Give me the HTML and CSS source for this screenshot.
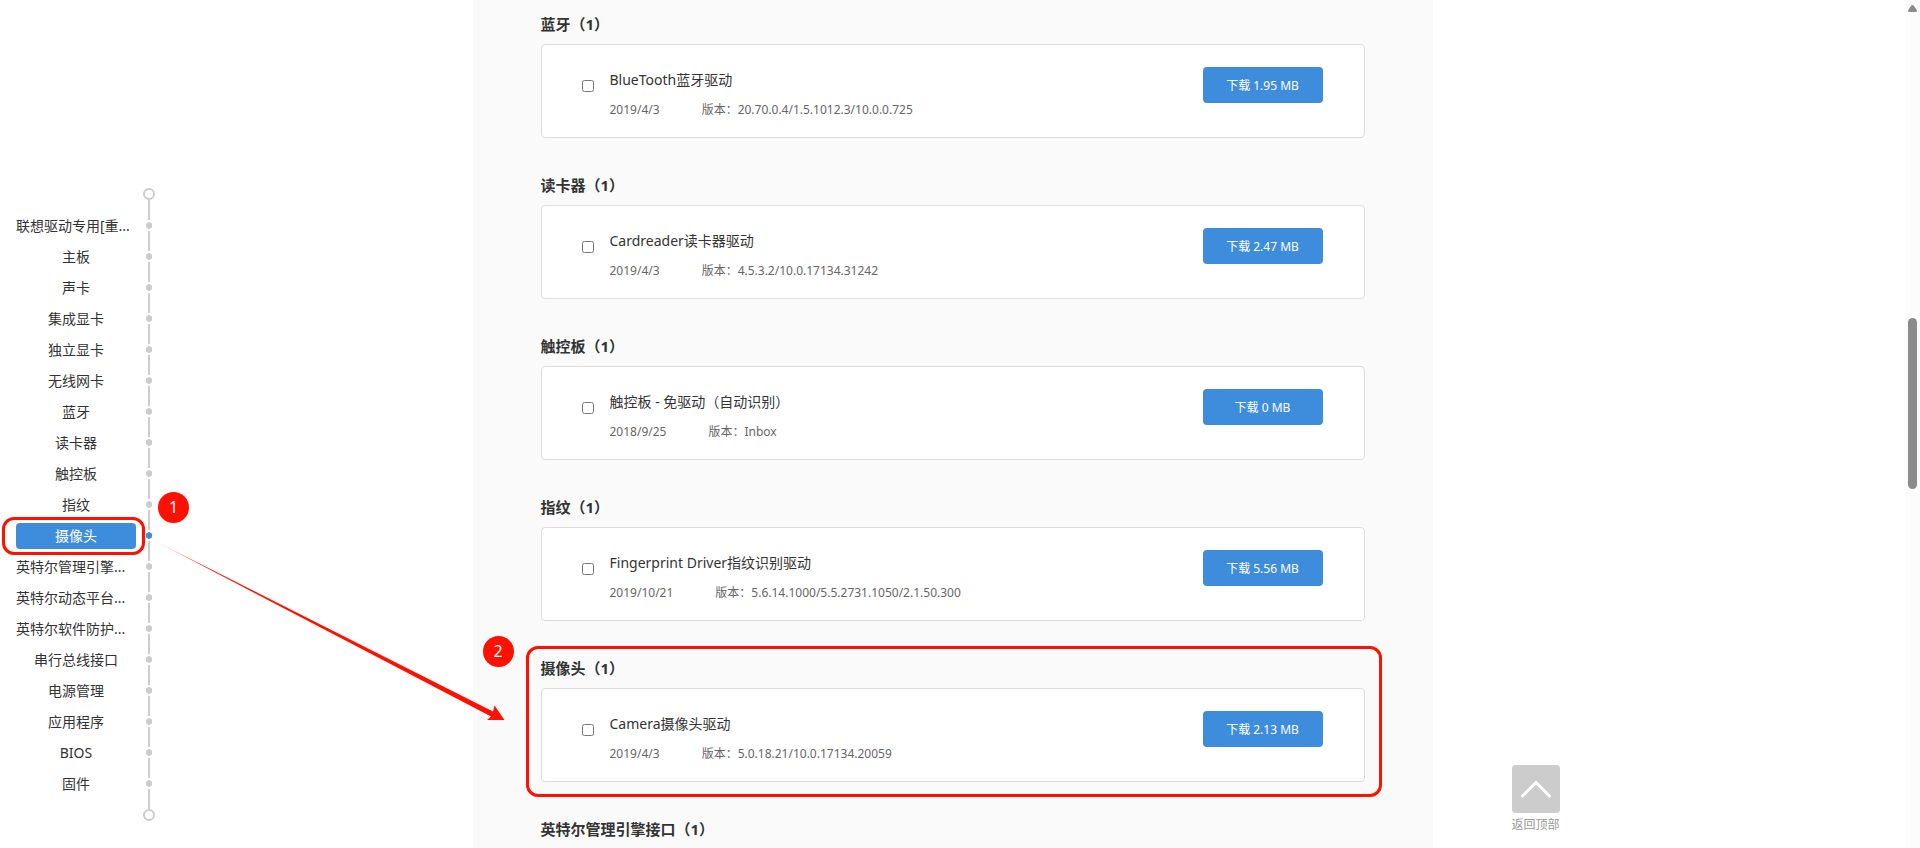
FILE: index.html
```html
<!DOCTYPE html>
<html lang="zh-CN">
<head>
  <meta charset="UTF-8">
  <meta name="viewport" content="width=device-width, initial-scale=1.0">
  <title>驱动下载</title>
  <link rel="stylesheet" href="styles.css">
</head>
<body>
  <div class="page">
    <nav class="side-nav">
      <div class="rail-end rail-top"></div>
      <ul>
        <li><a href="#" class="long">联想驱动专用[重...</a><span class="rail"></span></li>
        <li><a href="#">主板</a><span class="rail"></span></li>
        <li><a href="#">声卡</a><span class="rail"></span></li>
        <li><a href="#">集成显卡</a><span class="rail"></span></li>
        <li><a href="#">独立显卡</a><span class="rail"></span></li>
        <li><a href="#">无线网卡</a><span class="rail"></span></li>
        <li><a href="#bluetooth">蓝牙</a><span class="rail"></span></li>
        <li><a href="#cardreader">读卡器</a><span class="rail"></span></li>
        <li><a href="#touchpad">触控板</a><span class="rail"></span></li>
        <li><a href="#fingerprint">指纹</a><span class="rail"></span></li>
        <li class="active">
          <a href="#camera">摄像头</a><span class="rail"></span>
          <span class="step step-1">1</span>
        </li>
        <li><a href="#mei" class="long">英特尔管理引擎...</a><span class="rail"></span></li>
        <li><a href="#" class="long">英特尔动态平台...</a><span class="rail"></span></li>
        <li><a href="#" class="long">英特尔软件防护...</a><span class="rail"></span></li>
        <li><a href="#">串行总线接口</a><span class="rail"></span></li>
        <li><a href="#">电源管理</a><span class="rail"></span></li>
        <li><a href="#">应用程序</a><span class="rail"></span></li>
        <li><a href="#">BIOS</a><span class="rail"></span></li>
        <li><a href="#">固件</a><span class="rail"></span></li>
      </ul>
      <div class="rail-end rail-bottom"></div>
    </nav>

    <main class="drivers">
      <section class="group" id="bluetooth">
        <h2>蓝牙（1）</h2>
        <div class="card">
          <input type="checkbox" id="d1">
          <div class="info">
            <label for="d1">BlueTooth蓝牙驱动</label>
            <p class="meta"><span>2019/4/3</span><span>版本：20.70.0.4/1.5.1012.3/10.0.0.725</span></p>
          </div>
          <button type="button" class="download">下载 1.95 MB</button>
        </div>
      </section>

      <section class="group" id="cardreader">
        <h2>读卡器（1）</h2>
        <div class="card">
          <input type="checkbox" id="d2">
          <div class="info">
            <label for="d2">Cardreader读卡器驱动</label>
            <p class="meta"><span>2019/4/3</span><span>版本：4.5.3.2/10.0.17134.31242</span></p>
          </div>
          <button type="button" class="download">下载 2.47 MB</button>
        </div>
      </section>

      <section class="group" id="touchpad">
        <h2>触控板（1）</h2>
        <div class="card">
          <input type="checkbox" id="d3">
          <div class="info">
            <label for="d3">触控板 - 免驱动（自动识别）</label>
            <p class="meta"><span>2018/9/25</span><span>版本：Inbox</span></p>
          </div>
          <button type="button" class="download">下载 0 MB</button>
        </div>
      </section>

      <section class="group" id="fingerprint">
        <h2>指纹（1）</h2>
        <div class="card">
          <input type="checkbox" id="d4">
          <div class="info">
            <label for="d4">Fingerprint Driver指纹识别驱动</label>
            <p class="meta"><span>2019/10/21</span><span>版本：5.6.14.1000/5.5.2731.1050/2.1.50.300</span></p>
          </div>
          <button type="button" class="download">下载 5.56 MB</button>
        </div>
      </section>

      <section class="group marked" id="camera">
        <span class="step step-2">2</span>
        <h2>摄像头（1）</h2>
        <div class="card">
          <input type="checkbox" id="d5">
          <div class="info">
            <label for="d5">Camera摄像头驱动</label>
            <p class="meta"><span>2019/4/3</span><span>版本：5.0.18.21/10.0.17134.20059</span></p>
          </div>
          <button type="button" class="download">下载 2.13 MB</button>
        </div>
      </section>

      <section class="group" id="mei">
        <h2>英特尔管理引擎接口（1）</h2>
      </section>
    </main>

    <a href="#" class="back-top">
      <span class="back-icon">
        <svg width="48" height="48" viewBox="0 0 48 48" aria-hidden="true">
          <path d="M10.5 31 L24 17.5 L37.5 31" fill="none" stroke="#fff" stroke-width="3" stroke-linecap="round" stroke-linejoin="round"/>
        </svg>
      </span>
      返回顶部
    </a>

    <div class="scrollbar">
      <svg width="9" height="7" viewBox="0 0 9 7" aria-hidden="true">
        <path d="M4.5 0 Q5.4 0 6 1 L8.7 5 Q9.3 7 8 7 L1 7 Q-0.3 7 0.3 5 L3 1 Q3.6 0 4.5 0 Z" fill="#8b8b8b"/>
      </svg>
      <div class="thumb"></div>
    </div>
  </div>

  <!-- arrow from step 1 to step 2 -->
  <svg class="arrow" width="350" height="180" viewBox="0 0 350 180" aria-hidden="true">
    <defs>
      <linearGradient id="fade" gradientUnits="userSpaceOnUse" x1="0" y1="0" x2="60" y2="30">
        <stop offset="0" stop-color="#ff1000" stop-opacity="0.4"/>
        <stop offset="1" stop-color="#ff1000"/>
      </linearGradient>
    </defs>
    <path d="M0 0 L338 170.500 L339.500 164.500 L349.500 179 L332 179 L336 175.500 Z" fill="url(#fade)"/>
  </svg>
</body>
</html>
```

FILE: styles.css
```css
*, *::before, *::after { box-sizing: border-box; }
body { margin: 0; font-family: "Noto Sans", "Noto Sans CJK SC", sans-serif; font-size: 14px; color: #333; background: #fff; }
h2, p, ul { margin: 0; padding: 0; }
a { color: inherit; text-decoration: none; }

.page { display: grid; grid-template-columns: 1fr 960px 1fr 15px; min-height: 100vh; }

/* left navigation */
.side-nav { padding: 188px 0 0 16px; }
.side-nav ul { list-style: none; }
.side-nav li { position: relative; display: flex; align-items: center; gap: 7px; width: 139px; height: 31px; }
.side-nav a { width: 120px; height: 26px; line-height: 26px; border-radius: 4px; text-align: center; white-space: nowrap; }
.side-nav a.long { text-align: left; }
.rail { display: flex; flex-direction: column; align-items: center; justify-content: space-between; width: 12px; height: 31px; background: radial-gradient(circle, #ccc 3px, transparent 3.5px); }
.rail::before, .rail::after { content: ""; width: 2px; height: 10px; background: #ccc; }
.rail-end { display: flex; flex-direction: column; align-items: center; width: 12px; margin-left: 127px; }
.rail-bottom { flex-direction: column-reverse; }
.rail-end::before { content: ""; width: 12px; height: 12px; border: 2px solid #ccc; border-radius: 50%; }
.rail-end::after { content: ""; width: 2px; height: 10px; background: #ccc; }
.active a { background: #3e8ddd; color: #fff; }
.active .rail { background: radial-gradient(circle, #3e8ddd 3px, transparent 3.5px); }

/* driver list */
.drivers { padding: 14px 68px 0; background: #fafafa; }
.group { position: relative; margin-bottom: 37px; }
.group:last-child { margin-bottom: 0; }
.group h2 { margin-bottom: 10px; font-size: 15px; line-height: 20px; font-weight: bold; }
.card { display: flex; align-items: flex-start; padding: 22px 41px 14px 40px; border: 1px solid #ddd; border-radius: 4px; background: #fff; }
.card input { width: 12px; height: 12px; margin: 13px 16px 0 0; }
.info { flex: 1; }
.info label { display: block; line-height: 26px; }
.meta { display: flex; gap: 42px; margin-top: 4px; font-size: 12px; line-height: 26px; color: #666; }
.download { width: 120px; height: 36px; padding: 0; border: 0; border-radius: 4px; background: #3e8ddd; color: #fff; font-family: inherit; font-size: 12px; cursor: pointer; }

/* back to top */
.back-top { display: flex; flex-direction: column; align-self: end; width: 48px; margin: 0 0 16px 79px; font-size: 12px; line-height: 16px; color: #999; }
.back-icon { height: 48px; margin-bottom: 4px; border-radius: 4px; background: #ccc; }

.scrollbar { display: flex; flex-direction: column; align-items: center; padding-top: 5px; background: #fcfcfc; }
.thumb { width: 9px; height: 171px; margin-top: 306px; border-radius: 5px; background: #8b8b8b; }

/* red guide marks */
.active::after, .marked::after { content: ""; position: absolute; border: 3px solid #ff1000; border-radius: 12px; pointer-events: none; }
.active::after { inset: -3px 10px -4px -14px; }
.marked::after { inset: -12px -17px -15px -15px; }
.step { position: absolute; width: 31px; height: 31px; border-radius: 50%; background: #ff1000; color: #fff; font-size: 16px; line-height: 31px; text-align: center; }
.step-1 { left: 142px; top: -28px; }
.step-2 { left: -58px; top: -22px; }
.arrow { position: absolute; left: 155px; top: 541px; pointer-events: none; }
```
